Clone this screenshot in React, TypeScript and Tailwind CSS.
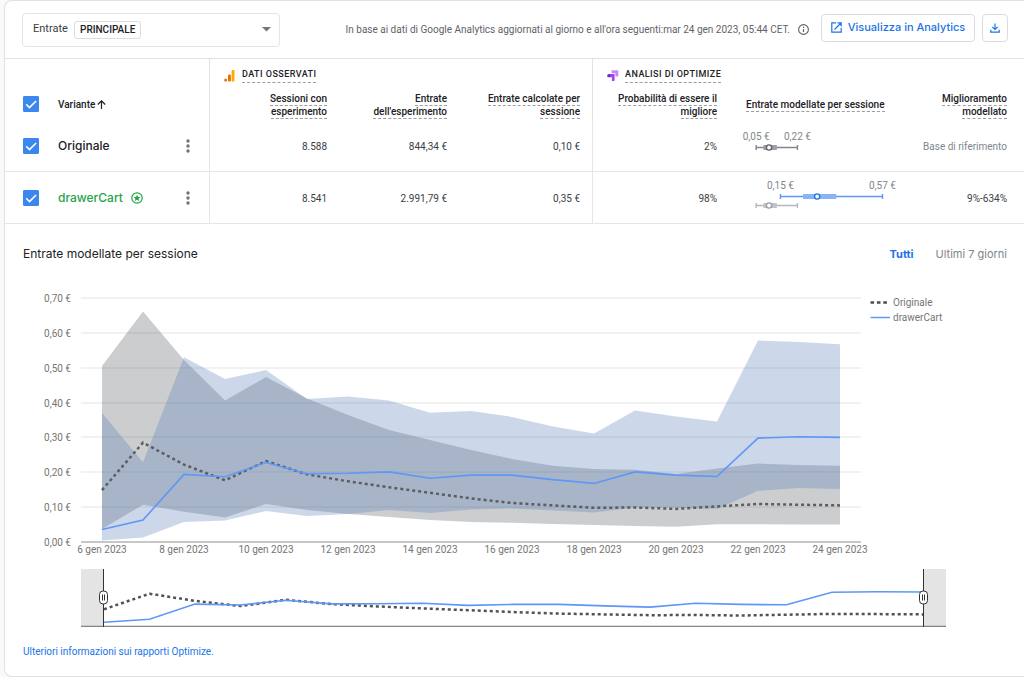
import { useState } from "react";
import type { ReactNode } from "react";

type Series = { name: string; mid: number[]; high: number[]; low: number[] };

const original: Series = {
  name: "Originale",
  mid: [0.149, 0.285, 0.222, 0.177, 0.232, 0.194, 0.174, 0.157, 0.141, 0.125, 0.112, 0.105, 0.098, 0.099, 0.095, 0.102, 0.109, 0.107, 0.105],
  high: [0.505, 0.661, 0.522, 0.406, 0.473, 0.412, 0.364, 0.321, 0.293, 0.264, 0.238, 0.219, 0.209, 0.207, 0.195, 0.211, 0.225, 0.221, 0.219],
  low: [0.037, 0.107, 0.087, 0.07, 0.109, 0.092, 0.08, 0.072, 0.063, 0.057, 0.055, 0.052, 0.049, 0.046, 0.044, 0.051, 0.051, 0.05, 0.05],
};

const drawerCart: Series = {
  name: "drawerCart",
  mid: [0.036, 0.063, 0.194, 0.187, 0.228, 0.196, 0.197, 0.201, 0.183, 0.192, 0.192, 0.179, 0.168, 0.201, 0.192, 0.188, 0.298, 0.302, 0.3],
  high: [0.37, 0.229, 0.53, 0.468, 0.493, 0.41, 0.417, 0.406, 0.371, 0.376, 0.359, 0.331, 0.311, 0.377, 0.36, 0.346, 0.578, 0.574, 0.567],
  low: [0.004, 0.013, 0.057, 0.062, 0.089, 0.075, 0.08, 0.092, 0.083, 0.093, 0.096, 0.09, 0.085, 0.099, 0.098, 0.095, 0.147, 0.155, 0.152],
};

const ticks = [0, 0.1, 0.2, 0.3, 0.4, 0.5, 0.6, 0.7];
const days = [6, 8, 10, 12, 14, 16, 18, 20, 22, 24];

const euro = (v: number) => `${v.toFixed(2).replace(".", ",")} €`;

const CheckBox = ({ label }: { label: string }) => (
  <span className="relative block size-4">
    <input
      type="checkbox"
      defaultChecked
      aria-label={label}
      className="peer block size-4 appearance-none rounded-[1px] border border-gray-400 checked:border-[#3b87ee] checked:bg-[#3b87ee]"
    />
    <svg viewBox="0 0 16 16" className="pointer-events-none absolute inset-0 hidden size-4 peer-checked:block">
      <path d="M3.2 8.3l3.3 3.3 6.6-6.6" fill="none" stroke="#fff" strokeWidth="1.6" />
    </svg>
  </span>
);

const MoreButton = ({ label }: { label: string }) => (
  <button type="button" aria-label={label} className="block">
    <svg width="6" height="16" viewBox="0 0 6 16" fill="#6f7276">
      <circle cx="3" cy="3" r="1.7" />
      <circle cx="3" cy="8" r="1.7" />
      <circle cx="3" cy="13" r="1.7" />
    </svg>
  </button>
);

const Hint = ({ children }: { children: ReactNode }) => (
  <span className="border-b border-dashed border-[#9a9da1] pb-px">{children}</span>
);

const AnalyticsIcon = () => (
  <svg width="12" height="12" viewBox="0 0 12 12">
    <rect x="7.6" y="0" width="2.9" height="11.6" rx="1" fill="#f9ab00" />
    <rect x="4" y="4.4" width="2.9" height="7.2" rx="1" fill="#e8710a" />
    <circle cx="1.6" cy="10.1" r="1.5" fill="#e8710a" />
  </svg>
);

const OptimizeIcon = () => (
  <svg width="12" height="12" viewBox="0 0 12 12">
    <path d="M4.6.3h5.8q.9 0 .9.9v5.300H8.4V3.2H4.6z" fill="#c58af9" />
    <path d="M2 4.1h5.600v6.100q0 .7-.7.7H4.900V7.200H2z" fill="#a142f4" />
    <circle cx="1.8" cy="5.7" r="1.600" fill="#7627bb" />
  </svg>
);

const StarBadge = () => (
  <svg width="12" height="12" viewBox="0 0 12 12">
    <circle cx="6" cy="6" r="5.2" fill="none" stroke="#1fa446" strokeWidth="1.2" />
    <path d="M6 2.7l1 2.2 2.3.2-1.7 1.6.5 2.3L6 7.8 3.9 9l.5-2.3-1.7-1.6L5 4.9z" fill="#1fa446" />
  </svg>
);

type RangeProps = { low: number; boxLow: number; mid: number; boxHigh: number; high: number; y: number; color: string; box: string; dot: string };

const rangeX = (v: number) => 8 + v * 243;

const Range = ({ low, boxLow, mid, boxHigh, high, y, color, box, dot }: RangeProps) => (
  <g>
    <path
      d={`M${rangeX(low)} ${y}H${rangeX(high)}M${rangeX(low)} ${y - 2.5}v5M${rangeX(high)} ${y - 2.5}v5`}
      stroke={color}
      strokeWidth="1.4"
      fill="none"
    />
    <rect x={rangeX(boxLow)} y={y - 2.5} width={rangeX(boxHigh) - rangeX(boxLow)} height="5" fill={box} />
    <circle cx={rangeX(mid)} cy={y} r="2.6" fill="#fff" stroke={dot} strokeWidth="1.4" />
  </g>
);

const RangeLabel = ({ v, y }: { v: number; y: number }) => (
  <text x={rangeX(v)} y={y} textAnchor="middle" className="fill-[#80868b] text-[10px]">
    {euro(v)}
  </text>
);

const baseRange = { low: 0.05, boxLow: 0.08, mid: 0.103, boxHigh: 0.135, high: 0.22 };
const cartRange = { low: 0.15, boxLow: 0.243, mid: 0.301, boxHigh: 0.38, high: 0.57 };

const linePath = (values: number[], x: (i: number) => number, y: (v: number) => number) =>
  values.map((v, i) => `${i === 0 ? "M" : "L"}${x(i).toFixed(1)} ${y(v).toFixed(1)}`).join("");

const bandPath = (s: Series, x: (i: number) => number, y: (v: number) => number) => {
  const last = s.low.length - 1;
  const back = [...s.low].reverse().map((v, i) => `L${x(last - i).toFixed(1)} ${y(v).toFixed(1)}`);
  return `${linePath(s.high, x, y)}${back.join("")}Z`;
};

const Handle = ({ x }: { x: number }) => (
  <g>
    <path d={`M${x} 289v58`} stroke="#333" strokeWidth="1" />
    <rect x={x - 4} y="311" width="8" height="13" rx="3.5" fill="#fff" stroke="#333" />
    <path d={`M${x - 1} 314.5v6M${x + 1} 314.5v6`} stroke="#333" strokeWidth="1" />
  </g>
);

const Chart = () => {
  const x = (i: number) => 97 + i * 41;
  const y = (v: number) => 262 - v * 348.6;
  const navX = (i: number) => 99 + i * 45.5;
  const navY = (v: number) => 346.4 - v * 114.7;

  return (
    <svg viewBox="0 0 1019 350" className="block w-full text-[10px]" role="img" aria-label="Entrate modellate per sessione">
      {ticks.map((t) => (
        <g key={t}>
          <path d={`M76 ${Math.round(y(t))}H856`} stroke={t === 0 ? "#b5b5b5" : "#e2e3e4"} strokeWidth={t === 0 ? 1.4 : 1.2} />
          <text x="66" y={Math.round(y(t)) + 4} textAnchor="end" fill="#757575">
            {euro(t)}
          </text>
        </g>
      ))}
      {days.map((d, i) => (
        <text key={d} x={x(i * 2)} y="273" textAnchor="middle" fill="#757575">
          {d} gen 2023
        </text>
      ))}
      <path d={bandPath(original, x, y)} fill="#55585c" fillOpacity="0.3" />
      <path d={bandPath(drawerCart, x, y)} fill="#557db9" fillOpacity="0.3" />
      <path d={linePath(original.mid, x, y)} fill="none" stroke="#5b5d60" strokeWidth="2.5" strokeDasharray="3 3" />
      <path d={linePath(drawerCart.mid, x, y)} fill="none" stroke="#5e97f6" strokeWidth="1.6" />

      <path d="M865.5 22.5h17" stroke="#4a4d51" strokeWidth="2.4" strokeDasharray="3.6 2.8" />
      <text x="888" y="26" fill="#757575">{original.name}</text>
      <path d="M865.5 37.5h19.5" stroke="#5e97f6" strokeWidth="1.5" />
      <text x="888" y="41" fill="#757575">{drawerCart.name}</text>

      <rect x="76" y="289" width="23" height="57" fill="#e4e4e4" />
      <rect x="918" y="289" width="23" height="57" fill="#e4e4e4" />
      <path d="M76 346.3H941" stroke="#858585" strokeWidth="1.3" />
      <path d={linePath(original.mid, navX, navY)} fill="none" stroke="#4f5154" strokeWidth="2.5" strokeDasharray="3 3" />
      <path d={linePath(drawerCart.mid, navX, navY)} fill="none" stroke="#5e97f6" strokeWidth="1.6" />
      <Handle x={98.5} />
      <Handle x={918.5} />
    </svg>
  );
};

const TopBar = () => (
  <header className="flex h-[58px] items-center justify-between border-b border-[#dfe1e5] pr-4 pl-[17px]">
    <div className="relative w-[258px]">
      <select
        aria-label="Obiettivo"
        className="block h-[34px] w-full appearance-none rounded border border-[#e3e5e8] bg-white px-2.5 text-[11px] text-[#3c4043]"
      >
        <option>Entrate</option>
      </select>
      <span className="pointer-events-none absolute top-2 left-[52px] flex h-[18px] items-center rounded-[3px] border border-[#dadce0] px-[5px] text-[10px] font-medium">
        PRINCIPALE
      </span>
      <svg className="pointer-events-none absolute top-3.5 right-[9px]" width="9" height="5" viewBox="0 0 9 5">
        <path d="M0 0h9L4.5 4.5z" fill="#757575" />
      </svg>
    </div>
    <div className="flex items-center">
      <p className="text-[10px] whitespace-nowrap text-[#5f6368]">
        In base ai dati di Google Analytics aggiornati al giorno e all'ora seguenti:mar 24 gen 2023, 05:44 CET.
      </p>
      <svg className="ml-2" width="11" height="11" viewBox="0 0 11 11" role="img" aria-label="Informazioni">
        <circle cx="5.5" cy="5.5" r="4.9" fill="none" stroke="#5f6368" strokeWidth="1.1" />
        <path d="M5.5 5v3M5.5 2.8v1.2" stroke="#5f6368" strokeWidth="1.2" />
      </svg>
      <button
        type="button"
        className="mb-1 ml-3 flex h-7 w-[154px] items-center justify-center gap-1.5 rounded border border-[#dadce0] font-['Inter',sans-serif] text-[11px] font-medium whitespace-nowrap text-[#1a73e8]"
      >
        <svg width="11" height="11" viewBox="0 0 11 11" fill="none" stroke="currentColor" strokeWidth="1.2">
          <path d="M5 .8H.8v9.4h9.4V6M6.5.8h3.7v3.7M10 1L3.5 7.5" />
        </svg>
        Visualizza in Analytics
      </button>
      <button
        type="button"
        aria-label="Scarica"
        className="mb-1 ml-[7px] flex h-7 w-[26px] items-center justify-center rounded border border-[#dadce0] text-[#1a73e8]"
      >
        <svg width="10" height="10" viewBox="0 0 10 10" fill="none" stroke="currentColor" strokeWidth="1.2">
          <path d="M5 .5v5.8M2.3 3.8L5 6.5l2.7-2.7M.8 6.8v2.4h8.4V6.8" />
        </svg>
      </button>
    </div>
  </header>
);

const ResultsTable = () => (
  <table className="w-full table-fixed border-separate border-spacing-0 text-right text-[10px]">
    <colgroup>
      <col className="w-[53px]" />
      <col className="w-[120px]" />
      <col className="w-8" />
      <col className="w-[117px]" />
      <col className="w-[120px]" />
      <col className="w-[146px]" />
      <col className="w-[124px]" />
      <col className="w-[183px]" />
      <col />
    </colgroup>
    <thead className="leading-[13px]">
      <tr className="h-[29px] text-left text-[9px]">
        <td colSpan={3} className="border-r border-[#dfe1e5] p-0" />
        <th colSpan={3} scope="colgroup" className="border-r border-[#dfe1e5] p-0 pt-1 pl-3.5 font-medium">
          <span className="flex items-center gap-1.5 tracking-wider">
            <AnalyticsIcon />
            <Hint>DATI OSSERVATI</Hint>
          </span>
        </th>
        <th colSpan={3} scope="colgroup" className="p-0 pt-1 pl-3.5 font-medium">
          <span className="flex items-center gap-1.5 tracking-wider">
            <OptimizeIcon />
            <Hint>ANALISI DI OPTIMIZE</Hint>
          </span>
        </th>
      </tr>
      <tr className="h-8">
        <td className="p-0 pl-[18px]">
          <CheckBox label="Tutte le varianti" />
        </td>
        <th scope="col" colSpan={2} className="border-r border-[#dfe1e5] p-0 text-left font-medium">
          <button type="button" className="flex items-center gap-0.5">
            Variante
            <svg width="9" height="9" viewBox="0 0 9 9" fill="none" stroke="currentColor" strokeWidth="1.2">
              <path d="M4.5 9V1M.8 4.5L4.500.8l3.7 3.7" />
            </svg>
          </button>
        </th>
        <th scope="col" className="p-0 pt-0.5 font-medium">
          <Hint>Sessioni con<br />esperimento</Hint>
        </th>
        <th scope="col" className="p-0 pt-0.5 font-medium">
          <Hint>Entrate<br />dell'esperimento</Hint>
        </th>
        <th scope="col" className="border-r border-[#dfe1e5] p-0 pt-0.5 pr-3 font-medium">
          <Hint>Entrate calcolate per<br />sessione</Hint>
        </th>
        <th scope="col" className="p-0 pt-0.5 font-medium">
          <Hint>Probabilità di essere il<br />migliore</Hint>
        </th>
        <th scope="col" className="p-0 pl-[29px] text-left font-medium whitespace-nowrap">
          <Hint>Entrate modellate per sessione</Hint>
        </th>
        <th scope="col" className="p-0 pt-0.5 pr-[17px] font-medium">
          <Hint>Miglioramento<br />modellato</Hint>
        </th>
      </tr>
    </thead>
    <tbody className="text-[#3c4043] [&_td]:border-b [&_td]:border-[#e4e6e9] [&_th]:border-b [&_th]:border-[#e4e6e9]">
      <tr className="h-[52px]">
        <td className="p-0 pl-[18px]">
          <CheckBox label="Originale" />
        </td>
        <th scope="row" className="p-0 text-left font-['Inter',sans-serif] text-[12px] font-medium text-[#202124]">
          Originale
        </th>
        <td className="border-r p-0 pl-[7px]">
          <MoreButton label="Altre opzioni per Originale" />
        </td>
        <td className="p-0 pt-0.5">8.588</td>
        <td className="p-0 pt-0.5">844,34 €</td>
        <td className="border-r p-0 pt-0.5 pr-3">0,10 €</td>
        <td className="p-0 pt-0.5">2%</td>
        <td className="p-0 pl-[19px]">
          <svg width="164" height="51" viewBox="0 0 164 51" className="block">
            <RangeLabel v={0.05} y={20} />
            <RangeLabel v={0.22} y={20} />
            <Range {...baseRange} y={27.5} color="#80868b" box="#9aa0a6" dot="#5f6368" />
          </svg>
        </td>
        <td className="p-0 pt-0.5 pr-[17px] text-[#80868b]">Base di riferimento</td>
      </tr>
      <tr className="h-[52px]">
        <td className="p-0 pl-[18px]">
          <CheckBox label="drawerCart" />
        </td>
        <th scope="row" className="p-0 text-left font-['Inter',sans-serif] text-[12px] font-medium text-[#1fa446]">
          <span className="flex items-center gap-2">
            drawerCart
            <StarBadge />
          </span>
        </th>
        <td className="border-r p-0 pl-[7px]">
          <MoreButton label="Altre opzioni per drawerCart" />
        </td>
        <td className="p-0 pt-0.5">8.541</td>
        <td className="p-0 pt-0.5">2.991,79 €</td>
        <td className="border-r p-0 pt-0.5 pr-3">0,35 €</td>
        <td className="p-0 pt-0.5">98%</td>
        <td className="p-0 pl-[19px]">
          <svg width="164" height="51" viewBox="0 0 164 51" className="block">
            <RangeLabel v={0.15} y={17} />
            <RangeLabel v={0.57} y={17} />
            <Range {...cartRange} y={24.5} color="#5e97f6" box="#8ab4f8" dot="#1a73e8" />
            <Range {...baseRange} y={33.5} color="#b4b8bc" box="#c0c4c8" dot="#9aa0a6" />
          </svg>
        </td>
        <td className="p-0 pt-0.5 pr-[17px]">9%-634%</td>
      </tr>
    </tbody>
  </table>
);

const App = () => {
  const [range, setRange] = useState("all");

  return (
    <main className="bg-[#f8f9fa] pl-1 font-['Roboto',sans-serif] text-[#202124]">
      <div className="rounded-l-lg border border-r-0 border-[#dfe1e5] bg-white">
        <TopBar />
        <ResultsTable />
        <section>
          <div className="flex items-center justify-between pt-[21px] pr-[17px] pl-[18px] font-['Inter',sans-serif] leading-[18px]">
            <h2 className="text-[12px]">Entrate modellate per sessione</h2>
            <div className="flex gap-[22px] text-[11px]">
              <button type="button" onClick={() => setRange("all")} className={range === "all" ? "font-bold text-[#1a73e8]" : "text-[#80868b]"}>
                Tutti
              </button>
              <button type="button" onClick={() => setRange("week")} className={range === "week" ? "font-bold text-[#1a73e8]" : "text-[#80868b]"}>
                Ultimi 7 giorni
              </button>
            </div>
          </div>
          <div className="pt-[17px]">
            <Chart />
          </div>
          <p className="px-[18px] pt-3.5 pb-4 text-[10px] leading-4">
            <a href="#rapporti" className="text-[#1a73e8]">Ulteriori informazioni sui rapporti Optimize.</a>
          </p>
        </section>
      </div>
    </main>
  );
};

export default App;
